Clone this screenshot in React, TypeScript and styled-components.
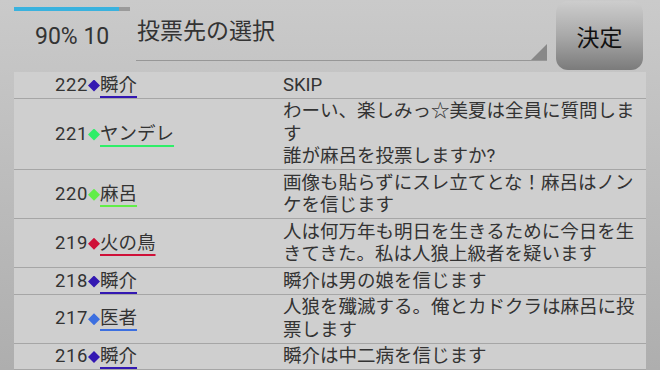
import React, { FunctionComponent } from 'react'
import styled, { createGlobalStyle } from 'styled-components'

const GlobalStyle = createGlobalStyle`
  html, body {
    margin: 0;
    padding: 0;
    width: 660px;
    height: 370px;
    overflow: hidden;
  }
  body {
    font-family: Roboto, "Noto Sans CJK JP", sans-serif;
    color: #333;
  }
`

const Screen = styled.div`
  width: 660px;
  height: 370px;
  overflow: hidden;
  background: linear-gradient(to bottom, #cacaca 0%, #aeaeae 100%);
`

const Header = styled.div`
  display: flex;
  height: 72px;
  padding: 0 17px 0 14px;
  box-sizing: border-box;
`

const Status = styled.div`
  width: 116px;
  display: flex;
  flex-direction: column;
`

const Progress = styled.div`
  margin-top: 7px;
  height: 4px;
  background: #9a9a9a;
`

const ProgressFill = styled.div`
  height: 100%;
  background: #3ab2de;
`

const StatusText = styled.div`
  margin: 13px 0 0 21px;
  font-size: 23px;
  line-height: 26px;
  color: #333;
  white-space: nowrap;
`

const Select = styled.div`
  position: relative;
  width: 411px;
  height: 61px;
  margin-left: 6px;
  border-bottom: 1.5px solid #979797;
  font-size: 23px;
  line-height: 28px;
  padding: 18px 0 0 1px;
  box-sizing: border-box;
  color: #333;
`

const SelectArrow = styled.div`
  position: absolute;
  right: 0;
  bottom: 0;
  width: 16px;
  height: 16px;
  background: #888;
  clip-path: polygon(100% 0, 100% 100%, 0 100%);
`

const Button = styled.button`
  margin: 1px 0 0 9px;
  width: 87px;
  height: 69px;
  border: none;
  border-radius: 12px;
  background: linear-gradient(to bottom, #cdcdcd 0%, #a9a9a9 50%, #7b7b7b 100%);
  font-family: Roboto, "Noto Sans CJK JP", sans-serif;
  font-size: 23px;
  color: #111;
  padding: 0;
`

const Table = styled.div`
  margin: 0 14px;
  padding-bottom: 12px;
  background: #cfcfcf;
`

const Row = styled.div`
  display: grid;
  grid-template-columns: 255px 1fr;
  border-bottom: 1px solid #a6a6a6;
`

const NameCell = styled.div`
  align-self: center;
  padding-left: 41px;
  font-size: 18.5px;
  line-height: 22.5px;
  white-space: nowrap;
`

const No = styled.span`
  letter-spacing: 0.6px;
`

const Diamond = styled.span<{ $color: string }>`
  display: inline-block;
  width: 12px;
  height: 12px;
  vertical-align: -1px;
  background: ${p => p.$color};
  clip-path: polygon(50% 0, 100% 50%, 50% 100%, 0 50%);
`

const Name = styled.span<{ $color: string }>`
  text-decoration: underline;
  text-decoration-color: ${p => p.$color};
  text-decoration-thickness: 2px;
  text-underline-offset: 5px;
`

const Message = styled.div`
  padding: 1.5px 5px 1.5px 14px;
  font-size: 18.5px;
  line-height: 22.5px;
  white-space: pre-line;
  word-break: break-all;
`

interface Vote {
  no: number
  name: string
  color: string
  text: string
}

const SHUNSUKE = '#3318b2'

const votes: Vote[] = [
  { no: 222, name: '瞬介', color: SHUNSUKE, text: 'SKIP' },
  { no: 221, name: 'ヤンデレ', color: '#2fee68', text: 'わーい、楽しみっ☆美夏は全員に質問します\n誰が麻呂を投票しますか?' },
  { no: 220, name: '麻呂', color: '#62ee48', text: '画像も貼らずにスレ立てとな！麻呂はノンケを信じます' },
  { no: 219, name: '火の鳥', color: '#cf1038', text: '人は何万年も明日を生きるために今日を生きてきた。私は人狼上級者を疑います' },
  { no: 218, name: '瞬介', color: SHUNSUKE, text: '瞬介は男の娘を信じます' },
  { no: 217, name: '医者', color: '#3c6fe0', text: '人狼を殲滅する。俺とカドクラは麻呂に投票します' },
  { no: 216, name: '瞬介', color: SHUNSUKE, text: '瞬介は中二病を信じます' },
]

const App: FunctionComponent = () => (
  <Screen>
    <GlobalStyle />
    <Header>
      <Status>
        <Progress>
          <ProgressFill style={{ width: `${(105 / 116) * 100}%` }} />
        </Progress>
        <StatusText>90% 10</StatusText>
      </Status>
      <Select>
        投票先の選択
        <SelectArrow />
      </Select>
      <Button>決定</Button>
    </Header>
    <Table>
      {votes.map(v => (
        <Row key={v.no}>
          <NameCell>
            <No>{v.no}</No>
            <Diamond $color={v.color} />
            <Name $color={v.color}>{v.name}</Name>
          </NameCell>
          <Message>{v.text}</Message>
        </Row>
      ))}
    </Table>
  </Screen>
)

export default App
